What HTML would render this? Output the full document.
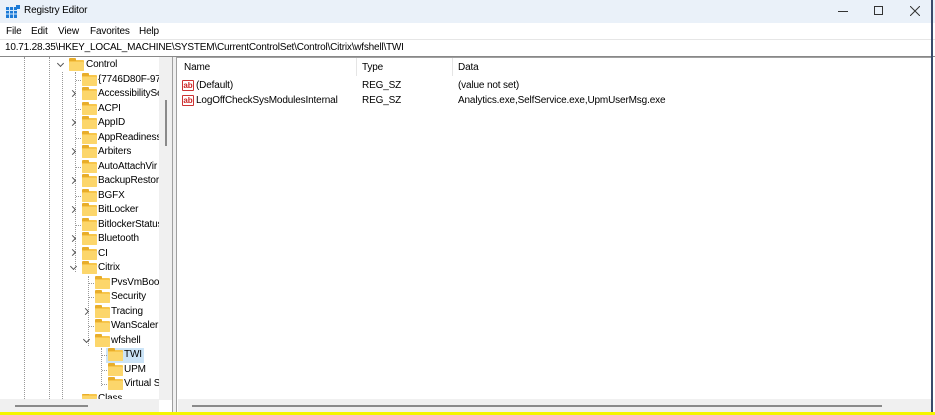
<!DOCTYPE html>
<html><head><style>
*{margin:0;padding:0;box-sizing:border-box}
body{width:935px;height:415px;overflow:hidden;background:#fff;font-family:"Liberation Sans",sans-serif;font-size:10px;letter-spacing:-0.15px;color:#000;position:relative}
.a{position:absolute;white-space:nowrap}
.row{position:absolute;height:14.5px;line-height:14.5px;white-space:nowrap}
.f{position:absolute;width:15px;height:11px;background:#f7c54a;border-radius:1px}
.f:before{content:"";position:absolute;left:0;top:-2px;width:7px;height:3px;background:#e8ad2a;border-radius:1px 1px 0 0}
.f:after{content:"";position:absolute;left:0;top:2px;width:15px;height:9px;background:#fcd66b;border-radius:1px}
.ch{position:absolute;width:5px;height:5px;border-right:1px solid #555;border-bottom:1px solid #555}
.dl{position:absolute;border-left:1px dotted #999}
.dh{position:absolute;border-top:1px dotted #999}
.ab{position:absolute;width:12px;height:11px;border:1px solid #c33;border-radius:1px;color:#c22;font-size:8px;font-weight:bold;line-height:9px;text-align:center;background:#fff;letter-spacing:0}
</style></head><body>
<div class="a" style="left:0;top:0;width:935px;height:23px;background:#eaf1f9"></div>
<svg class="a" style="left:6px;top:5px" width="14" height="13"><rect x="0" y="2" width="11" height="11" fill="#1c7ad6"/><g stroke="#cfe6fb" stroke-width="1"><line x1="0" y1="5.5" x2="11" y2="5.5"/><line x1="0" y1="9" x2="11" y2="9"/><line x1="3.5" y1="2" x2="3.5" y2="13"/><line x1="7.5" y1="2" x2="7.5" y2="13"/></g><rect x="10" y="0" width="4" height="4" fill="#1c7ad6"/></svg>
<div class="a" style="left:24px;top:5px">Registry Editor</div>
<div class="a" style="left:838px;top:11px;width:10px;border-top:1px solid #333"></div>
<div class="a" style="left:874px;top:6px;width:9px;height:9px;border:1px solid #333"></div>
<svg class="a" style="left:910px;top:6px" width="10" height="10"><path d="M0 0L10 10M10 0L0 10" stroke="#333" stroke-width="1"/></svg>
<div class="a" style="left:6px;top:26px">File</div>
<div class="a" style="left:31px;top:26px">Edit</div>
<div class="a" style="left:58px;top:26px">View</div>
<div class="a" style="left:90px;top:26px">Favorites</div>
<div class="a" style="left:139px;top:26px">Help</div>
<div class="a" style="left:0;top:39px;width:935px;height:18px;border-top:1px solid #e6e6e6;border-bottom:1px solid #888"></div>
<div class="a" style="left:5px;top:42px;letter-spacing:-0.2px">10.71.28.35\HKEY_LOCAL_MACHINE\SYSTEM\CurrentControlSet\Control\Citrix\wfshell\TWI</div>
<div class="a" style="left:159px;top:57px;width:13px;height:343px;background:#f0f0f0"></div>
<div class="a" style="left:165px;top:100px;height:46px;border-left:2px solid #8a8a8a"></div>
<div class="a" style="left:172px;top:57px;width:5px;height:355px;background:#f0f0f0;border-left:1px solid #a0a0a0;border-right:1px solid #a0a0a0"></div>
<div class="dl" style="left:24px;top:57px;height:342px"></div>
<div class="dl" style="left:49px;top:57px;height:342px"></div>
<div class="dl" style="left:62px;top:72px;height:327px"></div>
<div class="dl" style="left:75px;top:72px;height:200px"></div>
<div class="dl" style="left:88px;top:276px;height:70px"></div>
<div class="dl" style="left:101px;top:348px;height:38px"></div>

<div class="ch" style="left:58px;top:61px;transform:rotate(45deg)"></div><div class="f" style="left:69px;top:60px"></div><div class="row" style="left:86px;top:58px">Control</div>
<div class="dh" style="left:76px;top:80px;width:5px"></div><div class="f" style="left:82px;top:75px"></div><div class="row" style="left:98px;top:72.5px;width:61px;overflow:hidden">{7746D80F-97E</div>
<div class="ch" style="left:70px;top:91px;transform:rotate(-45deg)"></div><div class="f" style="left:82px;top:89px"></div><div class="row" style="left:98px;top:87px;width:61px;overflow:hidden">AccessibilitySe</div>
<div class="dh" style="left:76px;top:109px;width:5px"></div><div class="f" style="left:82px;top:104px"></div><div class="row" style="left:98px;top:101.5px">ACPI</div>
<div class="ch" style="left:70px;top:120px;transform:rotate(-45deg)"></div><div class="f" style="left:82px;top:118px"></div><div class="row" style="left:98px;top:116px">AppID</div>
<div class="dh" style="left:76px;top:138px;width:5px"></div><div class="f" style="left:82px;top:133px"></div><div class="row" style="left:98px;top:130.5px;width:61px;overflow:hidden">AppReadiness</div>
<div class="ch" style="left:70px;top:149px;transform:rotate(-45deg)"></div><div class="f" style="left:82px;top:147px"></div><div class="row" style="left:98px;top:145px">Arbiters</div>
<div class="dh" style="left:76px;top:167px;width:5px"></div><div class="f" style="left:82px;top:162px"></div><div class="row" style="left:98px;top:159.5px;width:61px;overflow:hidden">AutoAttachVir</div>
<div class="ch" style="left:70px;top:178px;transform:rotate(-45deg)"></div><div class="f" style="left:82px;top:176px"></div><div class="row" style="left:98px;top:174px;width:61px;overflow:hidden">BackupRestore</div>
<div class="dh" style="left:76px;top:196px;width:5px"></div><div class="f" style="left:82px;top:191px"></div><div class="row" style="left:98px;top:188.5px">BGFX</div>
<div class="ch" style="left:70px;top:207px;transform:rotate(-45deg)"></div><div class="f" style="left:82px;top:205px"></div><div class="row" style="left:98px;top:203px">BitLocker</div>
<div class="dh" style="left:76px;top:225px;width:5px"></div><div class="f" style="left:82px;top:220px"></div><div class="row" style="left:98px;top:217.5px;width:61px;overflow:hidden">BitlockerStatus</div>
<div class="ch" style="left:70px;top:236px;transform:rotate(-45deg)"></div><div class="f" style="left:82px;top:234px"></div><div class="row" style="left:98px;top:232px">Bluetooth</div>
<div class="ch" style="left:70px;top:250px;transform:rotate(-45deg)"></div><div class="f" style="left:82px;top:249px"></div><div class="row" style="left:98px;top:246.5px">CI</div>
<div class="ch" style="left:71px;top:264px;transform:rotate(45deg)"></div><div class="f" style="left:82px;top:263px"></div><div class="row" style="left:98px;top:261px">Citrix</div>
<div class="dh" style="left:89px;top:283px;width:5px"></div><div class="f" style="left:95px;top:278px"></div><div class="row" style="left:111px;top:275.5px;width:48px;overflow:hidden">PvsVmBoot</div>
<div class="dh" style="left:89px;top:297px;width:5px"></div><div class="f" style="left:95px;top:292px"></div><div class="row" style="left:111px;top:290px">Security</div>
<div class="ch" style="left:83px;top:309px;transform:rotate(-45deg)"></div><div class="f" style="left:95px;top:307px"></div><div class="row" style="left:111px;top:304.5px">Tracing</div>
<div class="dh" style="left:89px;top:326px;width:5px"></div><div class="f" style="left:95px;top:321px"></div><div class="row" style="left:111px;top:319px">WanScaler</div>
<div class="ch" style="left:84px;top:337px;transform:rotate(45deg)"></div><div class="f" style="left:95px;top:336px"></div><div class="row" style="left:111px;top:333.5px">wfshell</div>
<div class="a" style="left:106px;top:348px;width:38px;height:15px;background:#cce4f7"></div>
<div class="dh" style="left:102px;top:355px;width:5px"></div><div class="f" style="left:108px;top:350px"></div><div class="row" style="left:124px;top:348px">TWI</div>
<div class="dh" style="left:102px;top:370px;width:5px"></div><div class="f" style="left:108px;top:365px"></div><div class="row" style="left:124px;top:362.5px">UPM</div>
<div class="dh" style="left:102px;top:384px;width:5px"></div><div class="f" style="left:108px;top:379px"></div><div class="row" style="left:124px;top:377px;width:35px;overflow:hidden">Virtual S</div>
<div class="f" style="left:82px;top:394px;height:5px;overflow:hidden"></div><div class="row" style="left:98px;top:391.5px;height:7px;overflow:hidden">Class</div>
<div class="a" style="left:0;top:399px;width:159px;height:13px;background:#f0f0f0"></div>
<div class="a" style="left:15px;top:405px;width:73px;border-top:2px solid #8a8a8a"></div>

<div class="a" style="left:177px;top:57px;width:755px;height:355px;border-top:1px solid #a0a0a0"></div>
<div class="a" style="left:184px;top:62px">Name</div>
<div class="a" style="left:356px;top:58px;height:18px;border-left:1px solid #e5e5e5"></div>
<div class="a" style="left:362px;top:62px">Type</div>
<div class="a" style="left:452px;top:58px;height:18px;border-left:1px solid #e5e5e5"></div>
<div class="a" style="left:458px;top:62px">Data</div>
<div class="ab" style="left:182px;top:80px">ab</div>
<div class="a" style="left:196px;top:80px">(Default)</div>
<div class="a" style="left:362px;top:80px">REG_SZ</div>
<div class="a" style="left:458px;top:80px">(value not set)</div>
<div class="ab" style="left:182px;top:95px">ab</div>
<div class="a" style="left:196px;top:95px">LogOffCheckSysModulesInternal</div>
<div class="a" style="left:362px;top:95px">REG_SZ</div>
<div class="a" style="left:458px;top:95px">Analytics.exe,SelfService.exe,UpmUserMsg.exe</div>
<div class="a" style="left:178px;top:399px;width:754px;height:13px;background:#f0f0f0"></div>
<div class="a" style="left:192px;top:405px;width:690px;border-top:2px solid #8a8a8a"></div>
<div class="a" style="left:931px;top:0;width:2px;height:412px;background:#3a4a6a"></div>
<div class="a" style="left:0;top:412px;width:935px;height:3px;background:#f5f500"></div>
</body></html>
